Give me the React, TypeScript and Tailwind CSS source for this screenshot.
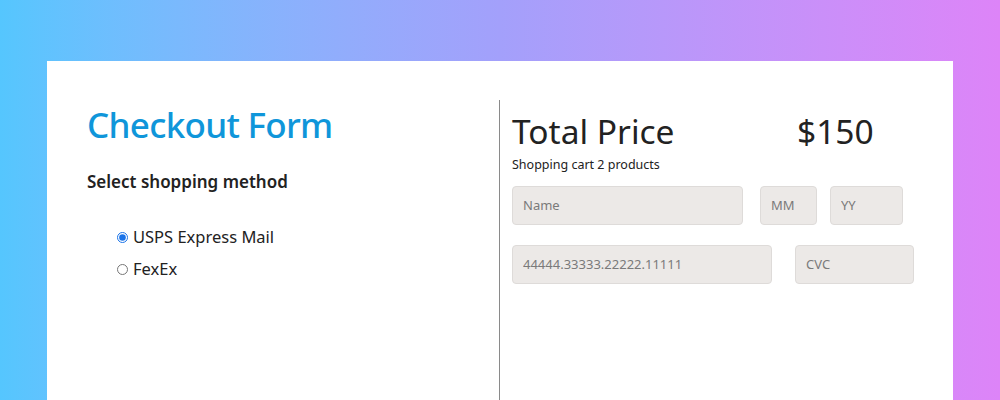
import React from "react";

const inputCls =
  "h-[39px] rounded-[4px] border border-[#dedbd9] bg-[#ece9e7] px-[10px] text-[13px] text-[#333] placeholder:text-[#7a7a7a] outline-none";

export default function App() {
  return (
    <div
      className="w-[1000px] h-[400px] overflow-hidden bg-gradient-to-r from-[#55c6fe] via-[#a3a0fb] to-[#dd84f8] pt-[61px] px-[47px]"
      style={{ fontFamily: '"Noto Sans", "Open Sans", sans-serif' }}
    >
      <div className="bg-white h-[400px] flex">
        <div className="w-[452px] pl-[40px] pt-[40px]">
          <h1 className="text-[35px] leading-[48px] font-medium text-[#0f96da] tracking-[-0.7px]">
            Checkout Form
          </h1>
          <h2 className="mt-[20px] text-[17px] font-semibold text-[#222]">
            Select shopping method
          </h2>
          <div className="mt-[30px] pl-[30px] flex flex-col gap-[7px] text-[16.5px] text-[#222]">
            <label className="flex items-center gap-[5px] h-[25px]">
              <input type="radio" name="m" defaultChecked className="w-[11px] h-[11px] m-0 accent-[#1a73e8]" />
              USPS Express Mail
            </label>
            <label className="flex items-center gap-[5px] h-[25px]">
              <input type="radio" name="m" className="w-[11px] h-[11px] m-0" />
              FexEx
            </label>
          </div>
        </div>
        <div className="mt-[39px] border-l border-[#8a8a8a] pl-[12px] flex-1 pt-[8px]">
          <div className="flex items-baseline text-[#222]">
            <span className="text-[33.5px] leading-[46px] w-[285px]">Total Price</span>
            <span className="text-[33.5px] leading-[46px]">$150</span>
          </div>
          <div className="text-[12.5px] text-[#222] mt-[2px]">Shopping cart 2 products</div>
          <div className="flex mt-[11px]">
            <input className={inputCls + " w-[231px]"} placeholder="Name" />
            <input className={inputCls + " w-[57px] ml-[17px]"} placeholder="MM" />
            <input className={inputCls + " w-[73px] ml-[13px]"} placeholder="YY" />
          </div>
          <div className="flex mt-[20px]">
            <input className={inputCls + " w-[260px]"} placeholder="44444.33333.22222.11111" />
            <input className={inputCls + " w-[119px] ml-[23px]"} placeholder="CVC" />
          </div>
        </div>
      </div>
    </div>
  );
}
